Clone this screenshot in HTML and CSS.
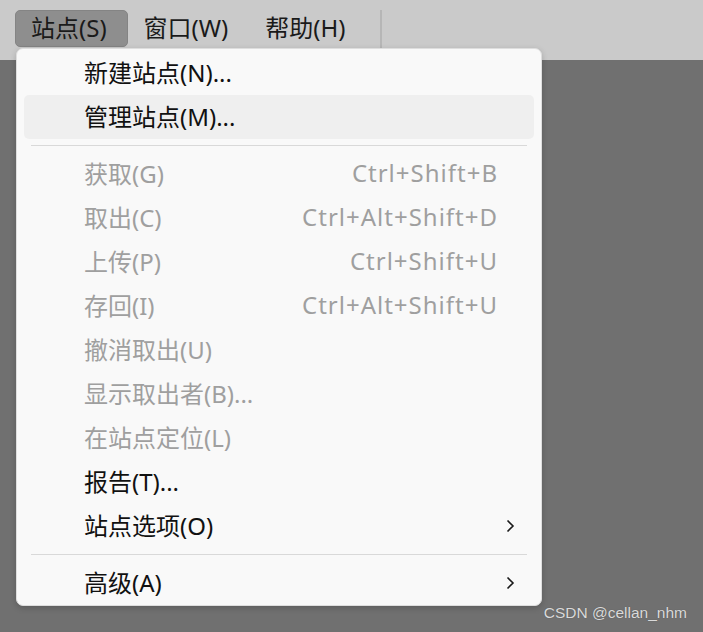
FILE: index.html
```html
<!DOCTYPE html>
<html lang="zh-CN">
<head>
<meta charset="utf-8">
<link rel="stylesheet" href="styles.css">
</head>
<body>
<div class="app">
  <div class="menubar">
    <div class="mb-item active">站点(S)</div>
    <div class="mb-item">窗口(W)</div>
    <div class="mb-item">帮助(H)</div>
    <div class="mb-sep"></div>
  </div>
  <div class="workspace"></div>

  <div class="menu">
    <div class="row"><span class="label">新建站点(N)...</span></div>
    <div class="row hover"><span class="label">管理站点(M)...</span></div>
    <div class="sep"></div>
    <div class="row disabled"><span class="label">获取(G)</span><span class="key">Ctrl+Shift+B</span></div>
    <div class="row disabled"><span class="label">取出(C)</span><span class="key">Ctrl+Alt+Shift+D</span></div>
    <div class="row disabled"><span class="label">上传(P)</span><span class="key">Ctrl+Shift+U</span></div>
    <div class="row disabled"><span class="label">存回(I)</span><span class="key">Ctrl+Alt+Shift+U</span></div>
    <div class="row disabled"><span class="label">撤消取出(U)</span></div>
    <div class="row disabled"><span class="label">显示取出者(B)...</span></div>
    <div class="row disabled"><span class="label">在站点定位(L)</span></div>
    <div class="row"><span class="label">报告(T)...</span></div>
    <div class="row"><span class="label">站点选项(O)</span><span class="arrow"><svg width="9" height="14" viewBox="0 0 9 14"><path d="M1.5 1.5 L7 7 L1.5 12.5" fill="none" stroke="#1b1b1b" stroke-width="1.6"/></svg></span></div>
    <div class="sep"></div>
    <div class="row"><span class="label">高级(A)</span><span class="arrow"><svg width="9" height="14" viewBox="0 0 9 14"><path d="M1.5 1.5 L7 7 L1.5 12.5" fill="none" stroke="#1b1b1b" stroke-width="1.6"/></svg></span></div>
  </div>

  <div class="watermark">CSDN @cellan_nhm</div>
</div>
</body>
</html>
```
FILE: styles.css
```css
html, body {
  margin: 0;
  padding: 0;
}
body {
  width: 703px;
  height: 632px;
  overflow: hidden;
  background: #707070;
  font-family: "Noto Sans", "Noto Sans CJK SC", sans-serif;
}
.app {
  position: relative;
  width: 703px;
  height: 632px;
  display: flex;
  flex-direction: column;
}
.menubar {
  height: 60px;
  background: #cacaca;
  display: flex;
  align-items: flex-start;
  padding: 10px 0 0 15px;
  box-sizing: border-box;
  flex: none;
}
.mb-item {
  height: 37px;
  line-height: 33px;
  padding: 0 20px 2px 15px;
  font-size: 24px;
  color: #1a1a1a;
  box-sizing: border-box;
  border: 1px solid transparent;
  border-radius: 5px;
  white-space: nowrap;
}
.mb-item.active {
  background: #8e8e8e;
  border-color: #848484;
}
.mb-sep {
  width: 2px;
  height: 38px;
  margin-left: 13px;
  background: #b6b6b6;
}
.workspace {
  flex: 1;
  background: #707070;
}
.menu {
  position: absolute;
  left: 16px;
  top: 48px;
  width: 526px;
  height: 558px;
  box-sizing: border-box;
  background: #f9f9f9;
  border: 1px solid #dedede;
  border-radius: 7px;
  padding: 2px 7px 0;
  box-shadow: 0 2px 6px rgba(0,0,0,0.18);
}
.row {
  height: 44px;
  box-sizing: border-box;
  display: flex;
  align-items: center;
  padding-left: 60px;
  padding-bottom: 4px;
  border-radius: 5px;
  font-size: 24px;
  color: #111;
}
.row.hover {
  background: #efefef;
}
.row.disabled {
  color: #9f9f9f;
}
.label {
  flex: 1;
  white-space: nowrap;
}
.key {
  padding-right: 37px;
  white-space: nowrap;
  letter-spacing: 1px;
  margin-right: -1px;
}
.arrow {
  width: 37px;
  display: flex;
  align-items: center;
  padding-left: 9px;
  padding-top: 4px;
  box-sizing: border-box;
  margin-left: auto;
}
.arrow svg {
  display: block;
}
.sep {
  height: 1px;
  background: #d9d9d9;
  margin: 6px 7px 6px;
}
.watermark {
  position: absolute;
  right: 16px;
  bottom: 10px;
  font-family: "Liberation Sans", Arial, sans-serif;
  font-size: 15.5px;
  color: #dadada;
  text-shadow: 0 0 1px rgba(0,0,0,0.3);
}
```
